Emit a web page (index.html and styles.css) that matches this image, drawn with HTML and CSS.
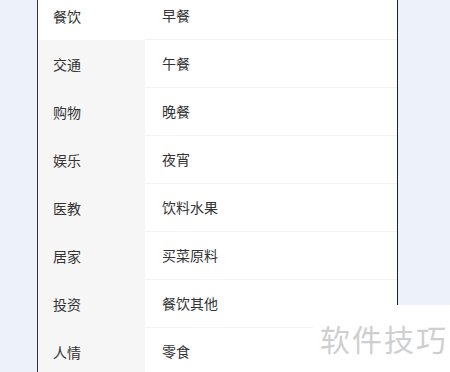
FILE: index.html
```html
<!DOCTYPE html>
<html>

<head>
    <title>分类</title>
    <link rel="stylesheet" href="styles.css">
</head>

<body>
    <div class="phone">
        <div class="picker">
            <ul class="nav">
                <li class="active">餐饮</li>
                <li>交通</li>
                <li>购物</li>
                <li>娱乐</li>
                <li>医教</li>
                <li>居家</li>
                <li>投资</li>
                <li>人情</li>
            </ul>
            <ul class="items">
                <li>早餐</li>
                <li>午餐</li>
                <li>晚餐</li>
                <li>夜宵</li>
                <li>饮料水果</li>
                <li>买菜原料</li>
                <li>餐饮其他</li>
                <li>零食</li>
            </ul>
        </div>
    </div>

    <div class="watermark">软件技巧</div>
</body>

</html>
```

FILE: styles.css
```css
body {
    font-family: "Noto Sans CJK SC", "Noto Sans", sans-serif;
    margin: 0;
    background-color: #edf1fa;
    height: 372px;
    overflow: hidden;
}

.phone {
    margin-left: 37px;
    width: 359px;
    height: 372px;
    background-color: #fff;
    border-left: 1px solid #333;
    border-right: 1px solid #222;
    overflow: hidden;
}

.picker {
    display: grid;
    grid-template-columns: 107px 1fr;
    margin-top: -8px;
}

.nav,
.items {
    list-style: none;
    margin: 0;
    padding: 0;
}

.nav li {
    height: 48px;
    line-height: 48px;
    padding-left: 15px;
    font-size: 14px;
    color: #333;
    background-color: #f6f6f6;
}

.nav li.active {
    background-color: #fff;
}

.items li {
    height: 47px;
    line-height: 47px;
    padding-left: 17px;
    font-size: 14px;
    color: #333;
    border-bottom: 1px solid #f3f3f3;
}

.watermark {
    position: absolute;
    left: 313px;
    top: 305px;
    width: 137px;
    height: 67px;
    background-color: #fff;
    color: #cfcfcf;
    font-size: 30px;
    letter-spacing: 2px;
    line-height: 66px;
    padding-left: 7px;
    box-sizing: border-box;
}
```
